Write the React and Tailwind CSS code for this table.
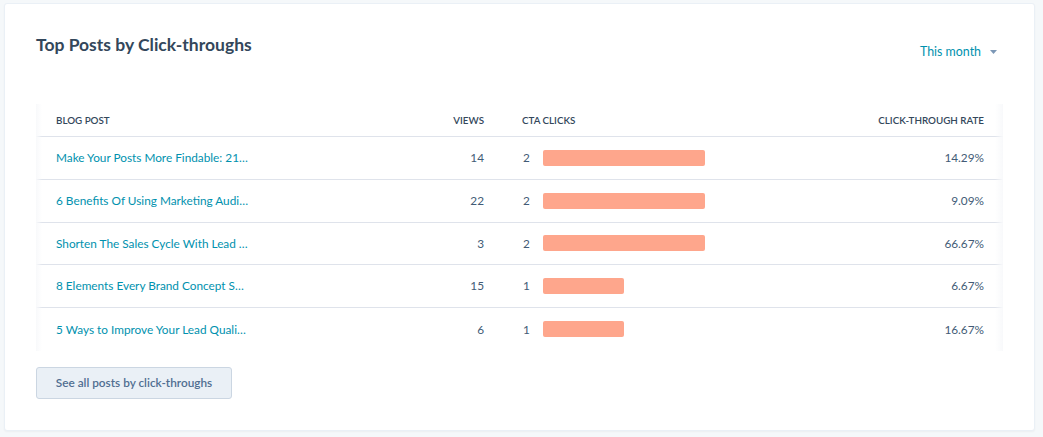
import React from "react";

const rows = [
  { title: "Make Your Posts More Findable: 21…", views: 14, clicks: 2, rate: "14.29%" },
  { title: "6 Benefits Of Using Marketing Audi…", views: 22, clicks: 2, rate: "9.09%" },
  { title: "Shorten The Sales Cycle With Lead …", views: 3, clicks: 2, rate: "66.67%" },
  { title: "8 Elements Every Brand Concept S…", views: 15, clicks: 1, rate: "6.67%" },
  { title: "5 Ways to Improve Your Lead Quali…", views: 6, clicks: 1, rate: "16.67%" },
];

export default function App() {
  return (
    <div
      className="w-[1043px] h-[437px] bg-[#f5f8fa] pt-[3px] pl-[4px] pr-[8px] pb-[6px] text-[#33475b]"
      style={{ fontFamily: "Lato, 'Noto Sans', sans-serif" }}
    >
      <div className="h-full bg-white rounded-[3px] border border-[#eaf0f6] shadow-[0_1px_2px_rgba(0,0,0,0.04)] pt-[31px] pl-[31px] pr-[31px]">
        <div className="flex justify-between items-start">
          <h2 className="text-[17.5px] leading-[22px] font-bold text-[#33475b] mt-[-1px]">
            Top Posts by Click-throughs
          </h2>
          <button className="flex items-center gap-[9px] mt-[7px] mr-[6px] text-[12.4px] leading-[20px] text-[#0091ae]">
            This month
            <svg width="7" height="4" viewBox="0 0 7 4">
              <path d="M0 0h7L3.5 4z" fill="#7c98b6" />
            </svg>
          </button>
        </div>

        <div className="mt-[42px] relative">
          <div className="absolute left-0 top-0 bottom-0 w-[6px] bg-gradient-to-r from-[#f8f9fb] to-transparent" />
          <div className="absolute right-0 top-0 bottom-0 w-[8px] bg-gradient-to-l from-[#f8f9fb] to-transparent" />
          <div className="grid grid-cols-[368px_100px_300px_1fr] h-[33px] items-center border-b border-[#dfe3eb] text-[9.8px] font-semibold uppercase text-[#33475b]">
            <div className="pl-[20px]">Blog Post</div>
            <div className="text-right pr-[20px]">Views</div>
            <div className="pl-[18px]">CTA Clicks</div>
            <div className="text-right pr-[19px]">Click-through rate</div>
          </div>
          {rows.map((r, i) => (
            <div
              key={i}
              className={`grid grid-cols-[368px_100px_300px_1fr] h-[42.75px] items-center text-[11.8px] ${
                i < rows.length - 1 ? "border-b border-[#dfe3eb]" : ""
              }`}
            >
              <div className="pl-[20px] text-[#0091ae] whitespace-nowrap">{r.title}</div>
              <div className="text-right pr-[20px] text-[#425b76]">{r.views}</div>
              <div className="pl-[19px] flex items-center text-[#425b76]">
                <span className="w-[20px]">{r.clicks}</span>
                <span
                  className="h-[16px] rounded-[2px] bg-[#fea68c]"
                  style={{ width: `${r.clicks * 81}px` }}
                />
              </div>
              <div className="text-right pr-[19px] text-[#425b76]">{r.rate}</div>
            </div>
          ))}
        </div>

        <button className="mt-[16px] w-[196px] h-[32px] rounded-[3px] border border-[#cbd6e2] bg-[#eaf0f6] text-[11.8px] font-semibold text-[#506e91]">
          See all posts by click-throughs
        </button>
      </div>
    </div>
  );
}
